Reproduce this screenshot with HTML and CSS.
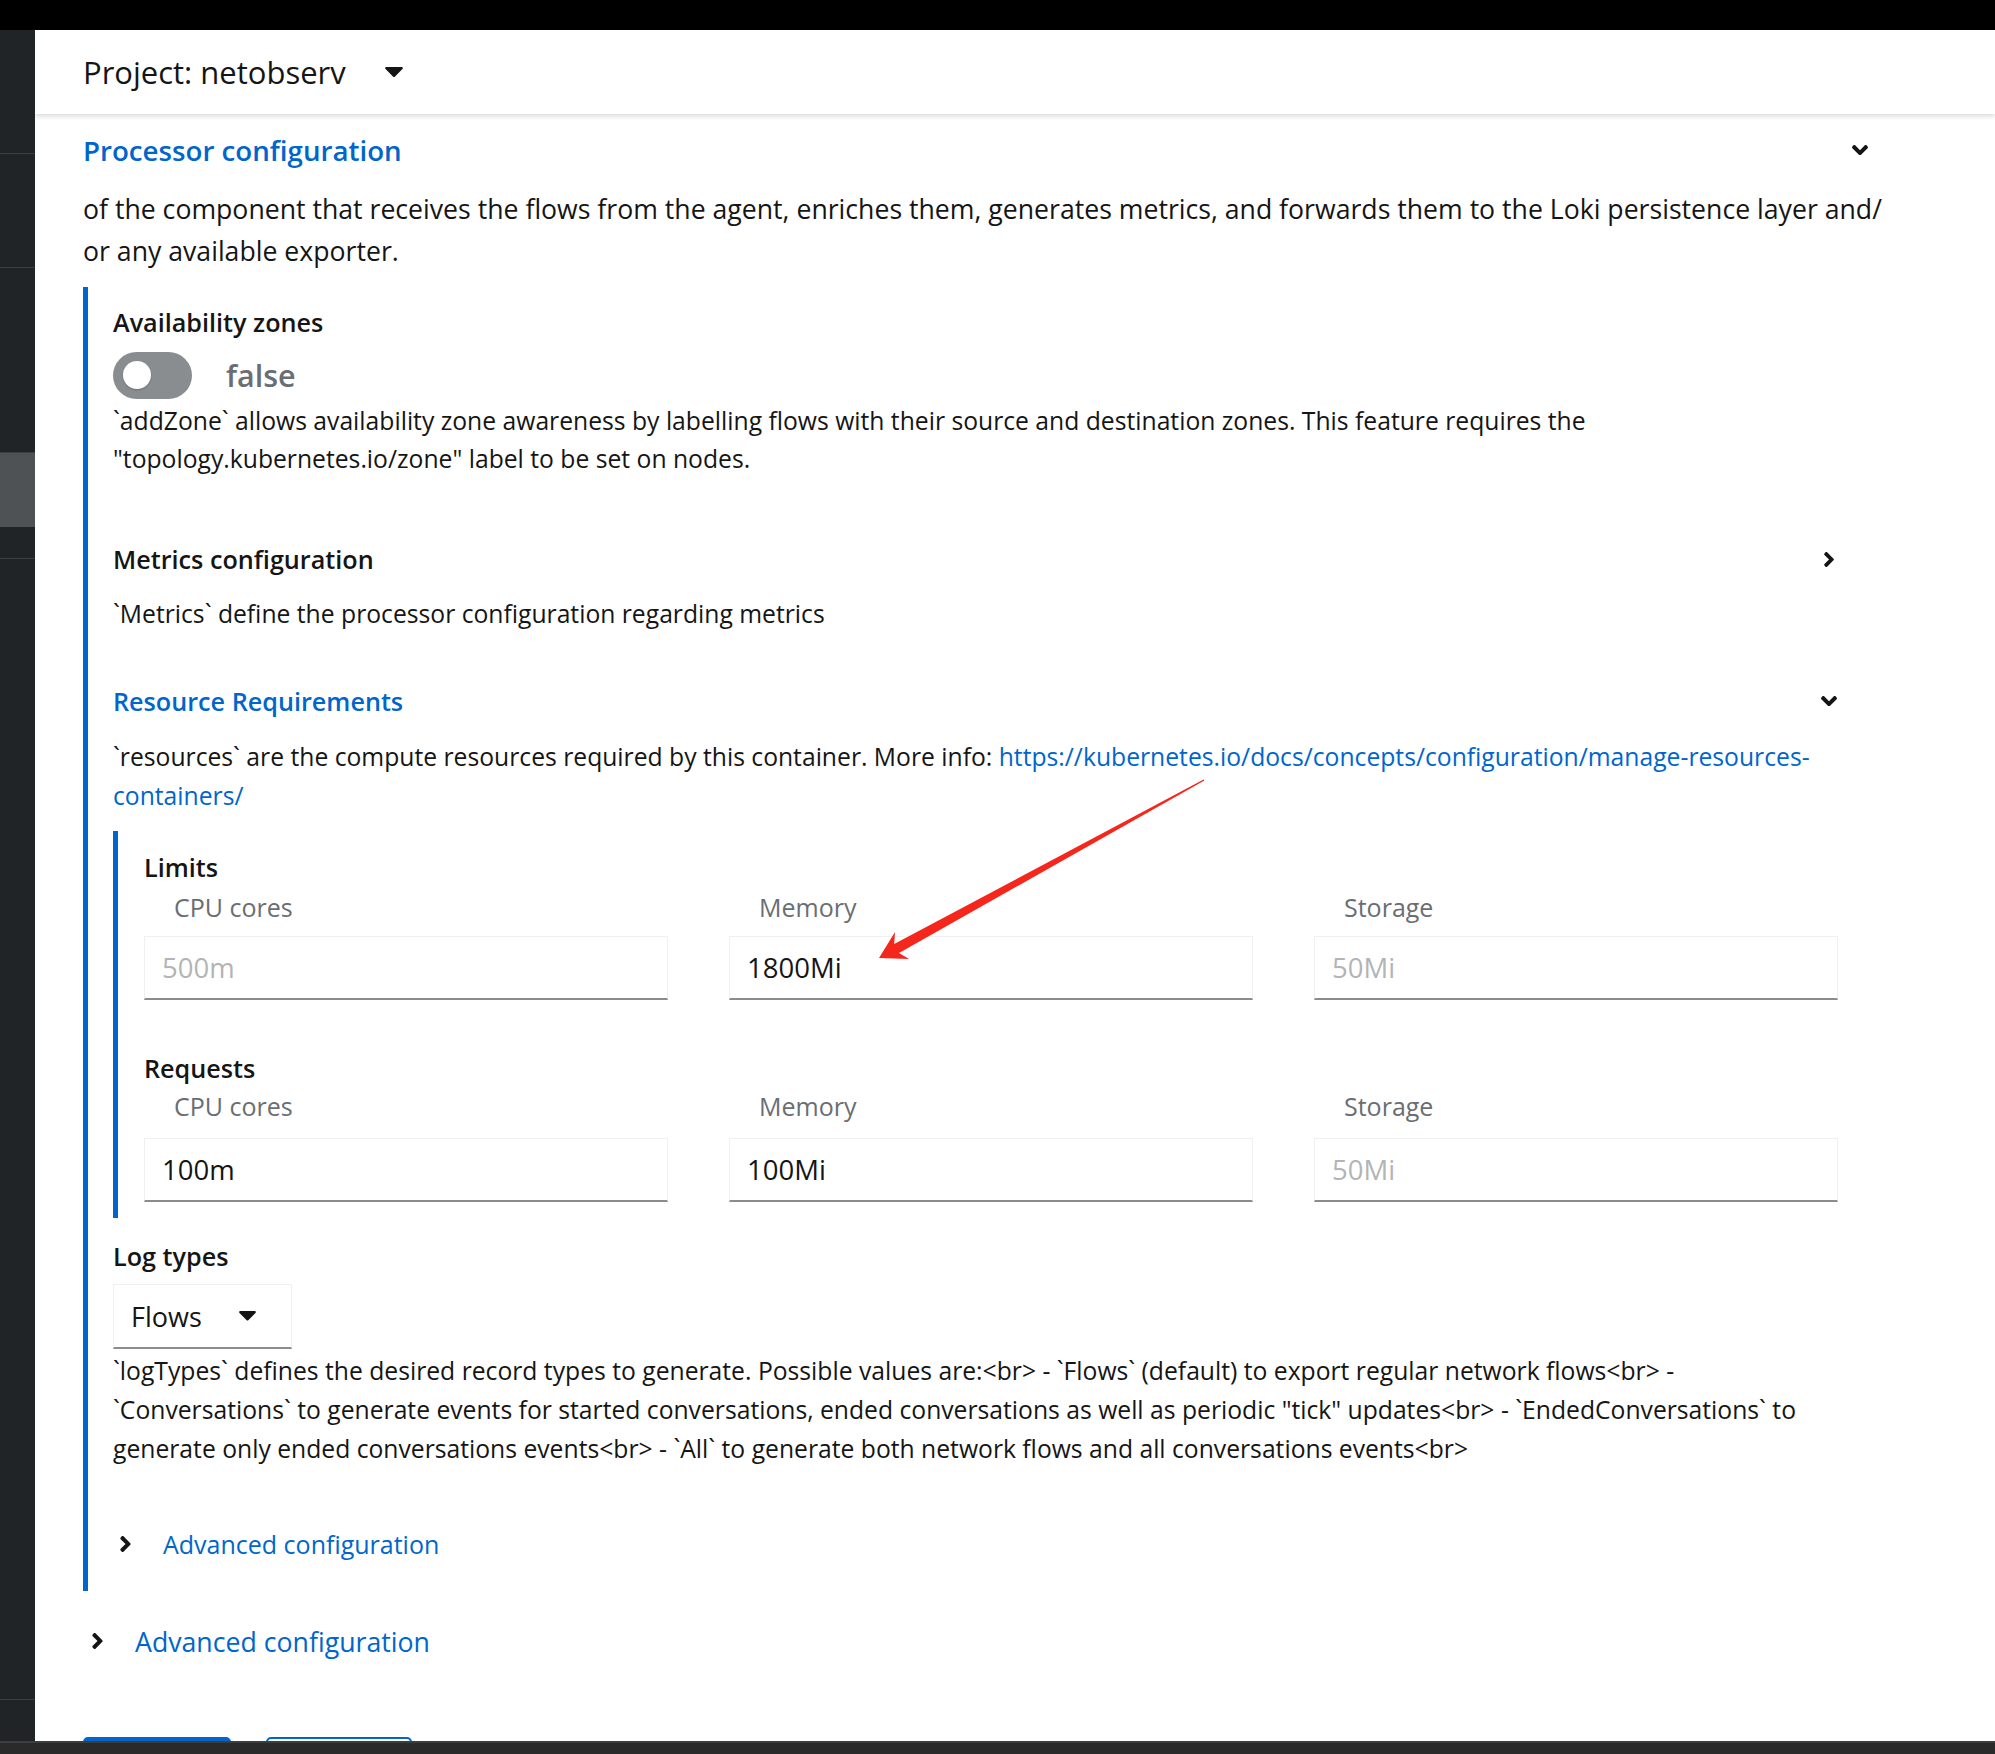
FILE: index.html
```html
<!DOCTYPE html>
<html lang="en">
<head>
<meta charset="utf-8">
<title>Processor configuration</title>
<link rel="stylesheet" href="styles.css">
</head>
<body>
<div class="topbar"></div>
<div class="shell">
  <nav class="sidebar">
    <div class="nav-item nav-a"></div>
    <div class="nav-item nav-b"></div>
    <div class="nav-item nav-c"></div>
    <div class="nav-item nav-active"></div>
    <div class="nav-item nav-d"></div>
    <div class="nav-item nav-e"></div>
    <div class="nav-item nav-f"></div>
  </nav>
  <main class="content">
    <header class="page-header">
      <span class="project">Project: netobserv</span>
      <svg class="caret" viewBox="8 192 304 169" width="18" height="10"><path d="M31.3 192h257.3c17.8 0 26.7 21.5 14.1 34.1L174.1 354.8c-7.8 7.8-20.5 7.8-28.3 0L17.2 226.1C4.6 213.5 13.5 192 31.3 192z"/></svg>
    </header>
    <div class="form">
      <div class="section-head">
        <span class="section-title">Processor configuration</span>
        <svg class="chev-down chev-main" viewBox="0 153 320 206" width="16" height="10.3"><path d="M143 352.3L7 216.3c-9.4-9.4-9.4-24.6 0-33.9l22.6-22.6c9.4-9.4 24.6-9.4 33.9 0l96.4 96.4 96.4-96.4c9.4-9.4 24.6-9.4 33.9 0l22.6 22.6c9.4 9.4 9.4 24.6 0 33.9l-136 136c-9.2 9.4-24.4 9.4-33.8 0z"/></svg>
      </div>
      <p class="section-desc">of the component that receives the flows from the agent, enriches them, generates metrics, and forwards them to the Loki persistence layer and/<wbr>or any available exporter.</p>

      <div class="group">
        <div class="field-label">Availability zones</div>
        <div class="switch-row">
          <span class="switch"><span class="knob"></span></span>
          <span class="switch-label">false</span>
        </div>
        <p class="helper helper-zone">`addZone` allows availability zone awareness by labelling flows with their source and destination zones. This feature requires the "topology.kubernetes.io/zone" label to be set on nodes.</p>

        <div class="sub-head sub-metrics">
          <span class="field-label">Metrics configuration</span>
          <svg class="chev-right" viewBox="22 96 212 320" width="10" height="15"><path d="M224.3 273l-136 136c-9.4 9.4-24.6 9.4-33.9 0l-22.6-22.6c-9.4-9.4-9.4-24.6 0-33.9l96.4-96.4-96.4-96.4c-9.4-9.4-9.4-24.6 0-33.9L54.3 103c9.4-9.4 24.6-9.4 33.9 0l136 136c9.5 9.4 9.5 24.6.1 34z"/></svg>
        </div>
        <p class="helper helper-metrics">`Metrics` define the processor configuration regarding metrics</p>

        <div class="sub-head sub-resources">
          <span class="field-label blue">Resource Requirements</span>
          <svg class="chev-down chev-sub" viewBox="0 153 320 206" width="16" height="10.3"><path d="M143 352.3L7 216.3c-9.4-9.4-9.4-24.6 0-33.9l22.6-22.6c9.4-9.4 24.6-9.4 33.9 0l96.4 96.4 96.4-96.4c9.4-9.4 24.6-9.4 33.9 0l22.6 22.6c9.4 9.4 9.4 24.6 0 33.9l-136 136c-9.2 9.4-24.4 9.4-33.8 0z"/></svg>
        </div>
        <p class="helper helper-resources">`resources` are the compute resources required by this container. More info: <a class="link" href="#">https://kubernetes.io/docs/concepts/configuration/manage-resources-containers/</a></p>

        <div class="nested">
          <div class="field-label">Limits</div>
          <div class="res-grid">
            <div class="cell">
              <div class="cell-label">CPU cores</div>
              <div class="input placeholder">500m</div>
            </div>
            <div class="cell">
              <div class="cell-label">Memory</div>
              <div class="input">1800Mi</div>
            </div>
            <div class="cell">
              <div class="cell-label">Storage</div>
              <div class="input placeholder">50Mi</div>
            </div>
          </div>
          <div class="field-label requests">Requests</div>
          <div class="res-grid">
            <div class="cell">
              <div class="cell-label">CPU cores</div>
              <div class="input">100m</div>
            </div>
            <div class="cell">
              <div class="cell-label">Memory</div>
              <div class="input">100Mi</div>
            </div>
            <div class="cell">
              <div class="cell-label">Storage</div>
              <div class="input placeholder">50Mi</div>
            </div>
          </div>
        </div>

        <div class="field-label logtypes">Log types</div>
        <div class="select">
          <span>Flows</span>
          <svg class="caret caret-select" viewBox="8 192 304 169" width="17" height="9.5"><path d="M31.3 192h257.3c17.8 0 26.7 21.5 14.1 34.1L174.1 354.8c-7.8 7.8-20.5 7.8-28.3 0L17.2 226.1C4.6 213.5 13.5 192 31.3 192z"/></svg>
        </div>
        <p class="helper helper-log">`logTypes` defines the desired record types to generate. Possible values are:&lt;br&gt; - `Flows` (default) to export regular network flows&lt;br&gt; - `Conversations` to generate events for started conversations, ended conversations as well as periodic "tick" updates&lt;br&gt; - `EndedConversations` to generate only ended conversations events&lt;br&gt; - `All` to generate both network flows and all conversations events&lt;br&gt;</p>

        <div class="adv adv-inner">
          <svg class="chev-right" viewBox="22 96 212 320" width="11" height="16"><path d="M224.3 273l-136 136c-9.4 9.4-24.6 9.4-33.9 0l-22.6-22.6c-9.4-9.4-9.4-24.6 0-33.9l96.4-96.4-96.4-96.4c-9.4-9.4-9.4-24.6 0-33.9L54.3 103c9.4-9.4 24.6-9.4 33.9 0l136 136c9.5 9.4 9.5 24.6.1 34z"/></svg>
          <span class="adv-text">Advanced configuration</span>
        </div>
      </div>

      <div class="adv adv-outer">
        <svg class="chev-right" viewBox="22 96 212 320" width="11" height="16"><path d="M224.3 273l-136 136c-9.4 9.4-24.6 9.4-33.9 0l-22.6-22.6c-9.4-9.4-9.4-24.6 0-33.9l96.4-96.4-96.4-96.4c-9.4-9.4-9.4-24.6 0-33.9L54.3 103c9.4-9.4 24.6-9.4 33.9 0l136 136c9.5 9.4 9.5 24.6.1 34z"/></svg>
        <span class="adv-text">Advanced configuration</span>
      </div>

      <div class="actions">
        <button class="btn btn-primary" aria-label="Create"></button>
        <button class="btn btn-secondary" aria-label="Cancel"></button>
      </div>
    </div>
  </main>
</div>
<div class="bottombar"></div>
<svg class="annotation" viewBox="0 0 1995 1754" width="1995" height="1754">
  <polygon points="879,958 909,959 899,953 1204.4,780.6 1203.6,779.4 894.2,944 895,932" fill="#f5261b"/>
</svg>
</body>
</html>
```
FILE: styles.css
```css
* { box-sizing: border-box; }

body {
  margin: 0;
  width: 1995px;
  height: 1754px;
  overflow: hidden;
  position: relative;
  background: #000;
  font-family: "Open Sans", "Liberation Sans", sans-serif;
  color: #151515;
}

p { margin: 0; }

.topbar {
  height: 30px;
  background: #000;
}

.shell {
  display: flex;
  height: 1711px;
}

.sidebar {
  width: 35px;
  flex-shrink: 0;
  background: #212427;
  display: flex;
  flex-direction: column;
}

.nav-item { border-bottom: 1px solid #3c3f42; }
.nav-a { height: 124px; }
.nav-b { height: 114px; }
.nav-c { height: 185px; }
.nav-active { height: 74px; background: #4f5255; border-bottom-color: #4f5255; }
.nav-d { height: 32px; }
.nav-e { height: 1141px; }
.nav-f { border-bottom: none; flex: 1; }

.content {
  flex: 1;
  background: #fff;
  display: flex;
  flex-direction: column;
  overflow: hidden;
}

.page-header {
  height: 84px;
  flex-shrink: 0;
  display: flex;
  align-items: center;
  padding-left: 48px;
  background: #fff;
  box-shadow: 0 2px 5px rgba(3, 3, 3, 0.16);
  position: relative;
  z-index: 1;
}

.project {
  font-size: 31px;
  line-height: 42px;
}

.caret { fill: #151515; display: block; }
.page-header .caret { margin-left: 39px; }

.form {
  padding: 15px 105px 0 48px;
}

.section-head {
  display: flex;
  justify-content: space-between;
  align-items: center;
  height: 42px;
}

.section-title {
  font-size: 27.7px;
  font-weight: 600;
  line-height: 42px;
  color: #0066cc;
}

.chev-down, .chev-right { fill: #151515; display: block; flex-shrink: 0; }
.chev-main { margin-right: 22px; }

.section-desc {
  margin-top: 17px;
  font-size: 26.65px;
  line-height: 42px;
}

.group {
  margin-top: 15px;
  border-left: 5px solid #0066cc;
  padding: 17px 40px 28px 25px;
}

.field-label {
  font-size: 25.2px;
  font-weight: 600;
  line-height: 36px;
}

.blue { color: #0066cc; }

.switch-row {
  margin-top: 11px;
  height: 48px;
  display: flex;
  align-items: center;
}

.switch {
  width: 79px;
  height: 47px;
  border-radius: 24px;
  background: #8a8d90;
  display: flex;
  align-items: center;
  padding-left: 10px;
}

.knob {
  width: 28px;
  height: 28px;
  border-radius: 50%;
  background: #fff;
  box-shadow: 0 1px 2px rgba(0, 0, 0, 0.2);
}

.switch-label {
  margin-left: 34px;
  font-size: 30.5px;
  font-weight: 600;
  color: #6a6e73;
}

.helper {
  font-size: 24.7px;
  line-height: 38px;
}

.helper-zone { margin-top: 3px; }

.sub-head {
  display: flex;
  justify-content: space-between;
  align-items: center;
  height: 36px;
}

.sub-metrics { margin-top: 63px; }
.sub-metrics .chev-right { margin-right: 16px; }
.helper-metrics { margin-top: 18px; }

.sub-resources { margin-top: 50px; }
.chev-sub { margin-right: 13px; }
.helper-resources { margin-top: 18px; line-height: 39px; }

.link { color: #0066cc; text-decoration: none; }

.nested {
  margin-top: 16px;
  border-left: 5px solid #0066cc;
  padding: 18px 12px 16px 26px;
}

.res-grid {
  display: grid;
  grid-template-columns: repeat(3, 1fr);
  column-gap: 61px;
  margin-top: 4px;
}

.requests { margin-top: 50px; }
.requests + .res-grid { margin-top: 2px; }
.requests + .res-grid .input { margin-top: 14px; }

.cell-label {
  padding-left: 30px;
  font-size: 25px;
  line-height: 36px;
  color: #6a6e73;
}

.input {
  margin-top: 11px;
  height: 64px;
  border: 1px solid #f0f0f0;
  border-bottom: 2px solid #8a8d90;
  padding-left: 17px;
  display: flex;
  align-items: center;
  font-size: 27.5px;
  color: #151515;
}

.input.placeholder { color: #b2b4b6; }

.logtypes { margin-top: 20px; }

.select {
  margin-top: 10px;
  width: 179px;
  height: 65px;
  border: 1px solid #f0f0f0;
  border-bottom: 2px solid #8a8d90;
  padding-left: 17px;
  display: flex;
  align-items: center;
  font-size: 27px;
}

.caret-select { margin-left: 37px; }

.helper-log {
  margin-top: 2px;
  line-height: 39px;
}

.adv {
  display: flex;
  align-items: center;
  color: #0066cc;
}

.adv-inner {
  margin-top: 57px;
  height: 38px;
  font-size: 25px;
}
.adv-inner .chev-right { margin-left: 7px; margin-right: 32px; }

.adv-outer {
  margin-top: 30px;
  height: 40px;
  font-size: 26.7px;
}
.adv-outer .chev-right { margin-left: 9px; margin-right: 32px; }

.actions {
  margin-top: 76px;
  display: flex;
  gap: 35px;
}

.btn {
  width: 148px;
  height: 60px;
  border-radius: 5px;
  border: 2px solid #0066cc;
  background: #fff;
  padding: 0;
}

.btn-primary { background: #0066cc; }
.btn-secondary { width: 146px; }

.bottombar {
  height: 13px;
  background: #2a2a2a;
  border-top: 2px solid #3d3d3d;
}

.annotation {
  position: absolute;
  left: 0;
  top: 0;
  pointer-events: none;
}
```
